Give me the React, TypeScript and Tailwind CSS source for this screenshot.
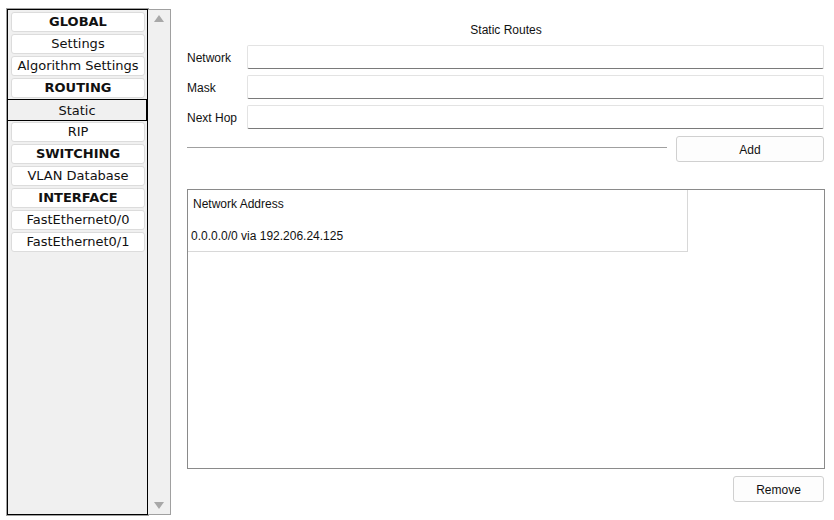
const menu = [
  { label: "GLOBAL", bold: true },
  { label: "Settings" },
  { label: "Algorithm Settings" },
  { label: "ROUTING", bold: true },
  { label: "Static", active: true },
  { label: "RIP" },
  { label: "SWITCHING", bold: true },
  { label: "VLAN Database" },
  { label: "INTERFACE", bold: true },
  { label: "FastEthernet0/0" },
  { label: "FastEthernet0/1" },
];

function MenuItem({ label, bold, active }: { label: string; bold?: boolean; active?: boolean }) {
  if (active) {
    return (
      <div className="h-[22px] w-[140px] -ml-[4px] -my-[1px] pt-px border border-black bg-[#f0f0f0] flex items-center justify-center text-[13px] text-[#111]">
        {label}
      </div>
    );
  }
  return (
    <div
      className={`h-[20px] w-[134px] rounded-[3px] border border-[#dcdcdc] bg-white flex items-center justify-center text-[13px] text-[#111] ${
        bold ? "font-bold" : ""
      }`}
    >
      {label}
    </div>
  );
}

function Field({ label }: { label: string }) {
  return (
    <div className="flex items-center h-[24px]">
      <span className="w-[60px] pt-px text-[12px] text-[#111]">{label}</span>
      <div className="flex-1 h-[24px] rounded-[2px] border border-[#e3e3e3] border-b-[#7a7a7a] bg-white" />
    </div>
  );
}

export default function App() {
  return (
    <div className="w-[834px] h-[520px] bg-white flex pt-[9px] pl-[7px] overflow-hidden">
      <div
        className="w-[141px] h-[506px] border border-black ring-1 ring-[#a0a0a0] bg-[#f0f0f0] flex flex-col gap-[2px] pt-[2px] pl-[3px]"
        style={{ fontFamily: '"DejaVu Sans", Verdana, sans-serif' }}
      >
        {menu.map((m) => (
          <MenuItem key={m.label} {...m} />
        ))}
      </div>
      <div className="w-[23px] h-[506px] border border-l-0 border-[#a0a0a0] bg-[#f0f0f0] flex flex-col items-center justify-between py-[5px]">
        <svg width="10" height="7" viewBox="0 0 10 7">
          <path d="M5 0 L10 7 L0 7 Z" fill="#a8a8a8" />
        </svg>
        <svg width="10" height="7" viewBox="0 0 10 7">
          <path d="M0 0 L10 0 L5 7 Z" fill="#a8a8a8" />
        </svg>
      </div>

      <div
        className="ml-[16px] w-[638px] flex flex-col pt-[11px]"
        style={{ fontFamily: '"Liberation Sans", Arial, sans-serif' }}
      >
        <div className="h-[18px] pt-[2px] flex items-center justify-center text-[12px] text-[#111]">Static Routes</div>
        <div className="mt-[7px] flex flex-col gap-[6px] pr-px">
          <Field label="Network" />
          <Field label="Mask" />
          <Field label="Next Hop" />
        </div>
        <div className="mt-[7px] flex items-center gap-[9px] pr-px">
          <div className="w-[480px] h-px bg-[#a0a0a0] -mt-[3px]" />
          <button className="flex-1 h-[26px] pt-px rounded-[3px] border border-[#d0d0d0] bg-[#fdfdfd] text-[12px] text-[#111]">
            Add
          </button>
        </div>
        <div className="mt-[27px] h-[280px] border border-[#8a8a8a] bg-white">
          <div className="w-[500px] h-[62px] border-r border-b border-[#d8d8d8] flex flex-col pl-[5px] pt-[5px] gap-[14px] text-[12px] text-[#111]">
            <span className="leading-[18px]">Network Address</span>
            <span className="leading-[18px] -ml-[2px]">0.0.0.0/0 via 192.206.24.125</span>
          </div>
        </div>
        <div className="mt-[7px] flex justify-end pr-px">
          <button className="w-[91px] h-[26px] pt-px rounded-[3px] border border-[#d0d0d0] bg-[#fdfdfd] text-[12px] text-[#111]">
            Remove
          </button>
        </div>
      </div>
    </div>
  );
}
